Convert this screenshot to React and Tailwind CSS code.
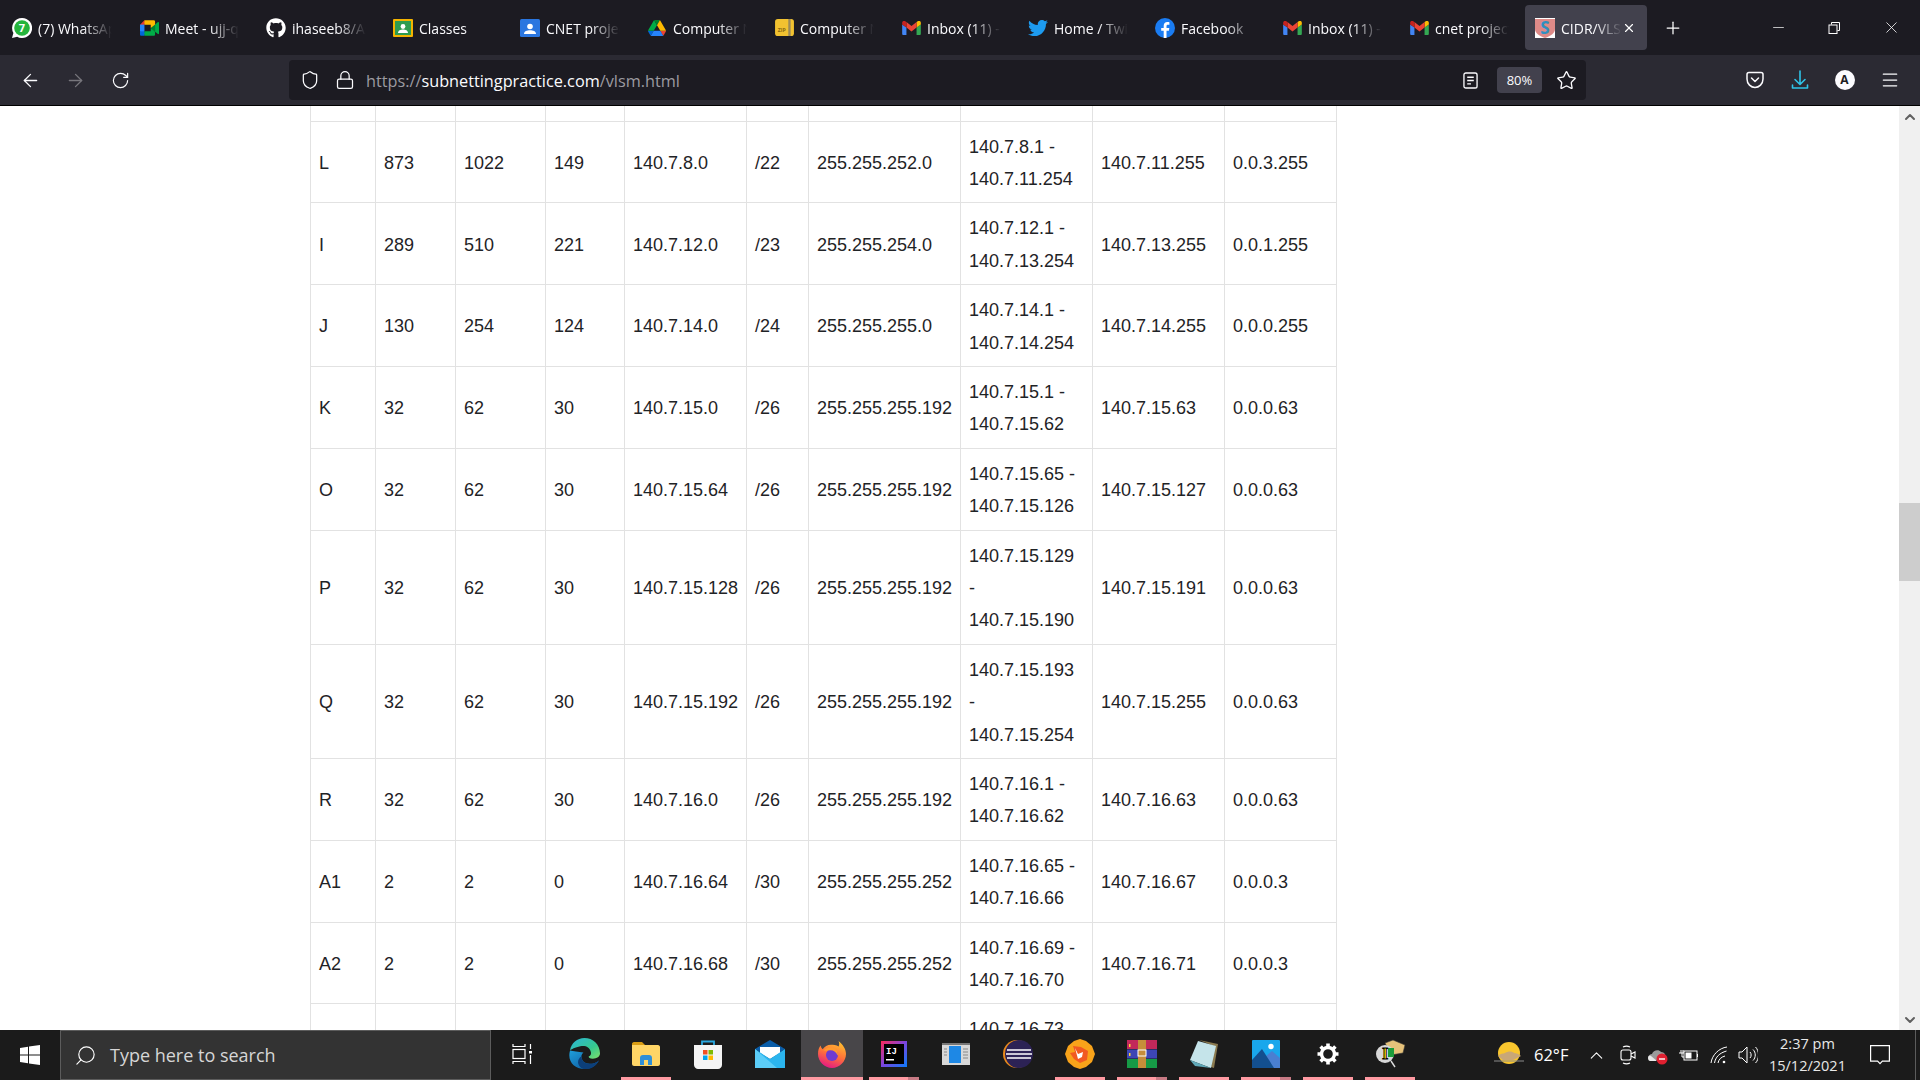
import { ArrowLeft, ArrowRight, RotateCw, Shield, Lock, Star, Plus, X, Minus, Menu, ChevronUp, ChevronDown, Search } from "lucide-react";
import { FaGithub, FaTwitter } from "react-icons/fa";

const uiFont = "font-['Open_Sans','Noto_Sans',sans-serif]";

// icons for the browser tabs
const WhatsappIcon = () => (
  <svg viewBox="0 0 20 20" className="w-5 h-5">
    <path fill="#fff" d="M10 0a10 10 0 0 0-8.6 15L0 20l5.200-1.300A10 10 0 1 0 10 0z" />
    <circle cx="10" cy="10" r="7.800" fill="#25b53c" />
    <text x="10" y="14" textAnchor="middle" fontSize="11" fontWeight="700" fill="#fff" fontFamily="Open Sans">7</text>
  </svg>
);
const MeetIcon = () => (
  <svg viewBox="0 0 87.500 72" className="w-[19px] h-4">
    <path fill="#00832d" d="M49.500 36l8.530 9.750 11.470 7.330 2-17.020-2-16.640-11.690 6.440z" />
    <path fill="#0066da" d="M0 51.500V66c0 3.315 2.685 6 6 6h14.500l3-10.960-3-9.540-9.950-3z" />
    <path fill="#e53935" d="M20.500 0L0 20.500l10.550 3 9.950-3 2.950-9.410z" />
    <path fill="#2684fc" d="M20.500 20.500H0v31h20.500z" />
    <path fill="#00ac47" d="M82.600 8.680L69.500 19.420v33.660l13.160 10.790c1.970 1.540 4.850.135 4.850-2.370V11c0-2.535-2.945-3.925-4.910-2.320zM49.500 36v15.500h-29V72h43c3.315 0 6-2.685 6-6V53.080z" />
    <path fill="#ffba00" d="M63.500 0h-43v20.500h29V36l20-16.570V6c0-3.315-2.685-6-6-6z" />
  </svg>
);
const ClassesIcon = () => (
  <svg viewBox="0 0 20 18" className="w-5 h-[18px]">
    <rect width="20" height="18" rx="1" fill="#f4b400" />
    <rect x="2" y="2" width="16" height="14" fill="#2e9c50" />
    <circle cx="10" cy="7.500" r="2.400" fill="#fff" />
    <path fill="#fff" d="M5 14c0-2.500 2.500-3.500 5-3.500s5 1 5 3.500z" />
  </svg>
);
const CnetIcon = () => (
  <svg viewBox="0 0 20 18" className="w-5 h-[18px]">
    <rect width="20" height="18" rx="1.500" fill="#2a76e0" />
    <circle cx="10" cy="7.500" r="2.800" fill="#fff" />
    <path fill="#fff" d="M4 15c0-2.800 3-3.800 6-3.800s6 1 6 3.800z" />
  </svg>
);
const DriveIcon = () => (
  <svg viewBox="0 0 87.300 78" className="w-[18px] h-4">
    <path fill="#0066da" d="m6.600 66.850 3.850 6.650c.8 1.400 1.950 2.500 3.300 3.300l13.750-23.800h-27.500c0 1.550.4 3.100 1.200 4.500z" />
    <path fill="#00ac47" d="m43.650 25-13.750-23.800c-1.350.8-2.500 1.900-3.300 3.300l-25.400 44a9.060 9.060 0 0 0 -1.200 4.500h27.500z" />
    <path fill="#ea4335" d="m73.550 76.800c1.350-.8 2.500-1.900 3.300-3.300l1.600-2.750 7.650-13.250c.8-1.400 1.200-2.950 1.200-4.500h-27.502l5.852 11.500z" />
    <path fill="#00832d" d="m43.650 25 13.750-23.800c-1.350-.8-2.900-1.200-4.500-1.200h-18.500c-1.600 0-3.150.45-4.500 1.200z" />
    <path fill="#2684fc" d="m59.800 53h-32.300l-13.750 23.800c1.350.8 2.900 1.200 4.500 1.200h50.800c1.600 0 3.150-.45 4.500-1.200z" />
    <path fill="#ffba00" d="m73.400 26.500-12.700-22c-.8-1.400-1.950-2.500-3.300-3.300l-13.750 23.800 16.150 28h27.450c0-1.550-.4-3.100-1.200-4.500z" />
  </svg>
);
const ZipIcon = () => (
  <svg viewBox="0 0 20 18" className="w-[19px] h-[17px]">
    <rect width="20" height="18" rx="3" fill="#f2c230" />
    <rect x="14" y="0" width="2.500" height="18" fill="#9a8a5a" />
    <text x="7" y="14" textAnchor="middle" fontSize="5.500" fontWeight="700" fill="#8a6a10" fontFamily="Open Sans">ZIP</text>
  </svg>
);
const GmailIcon = () => (
  <svg viewBox="0 0 24 18" className="w-[19px] h-[14px]">
    <path fill="#4285f4" d="M1.600 18H5.500V8.500L0 4.400V16.400C0 17.300.7 18 1.600 18z" />
    <path fill="#34a853" d="M18.500 18h3.900c.9 0 1.600-.7 1.600-1.600V4.400l-5.500 4.100z" />
    <path fill="#fbbc04" d="M18.500 1.400v7.100L24 4.400V2.200c0-2-2.300-3.200-3.900-2z" />
    <path fill="#ea4335" d="M5.500 8.500V1.400L12 6.300l6.500-4.900v7.100L12 13.400z" />
    <path fill="#c5221f" d="M0 2.200v2.200l5.500 4.100V1.400L3.900.2C2.300-1 0 .2 0 2.200z" />
  </svg>
);
const FacebookIcon = () => (
  <svg viewBox="0 0 20 20" className="w-5 h-5">
    <circle cx="10" cy="10" r="10" fill="#1a7cf2" />
    <path fill="#fff" d="M11.500 20v-7.200h2.400l.4-2.900h-2.800V8.200c0-.8.3-1.400 1.500-1.400h1.400V4.200c-.6-.1-1.300-.2-2.100-.2-2.200 0-3.600 1.300-3.600 3.800v2.100H6.200v2.900h2.500V20z" />
  </svg>
);
const SubnetIcon = () => (
  <svg viewBox="0 0 20 20" className="w-5 h-5 shrink-0">
    <rect width="20" height="20" fill="#fff" />
    <path fill="#de8a88" d="M0 1h20v10c0 4-4 7-10 9-6-2-10-5-10-9z" />
    <text x="10" y="15.500" textAnchor="middle" fontSize="17" fontWeight="700" fill="#2f8fc0" fontFamily="Open Sans">S</text>
  </svg>
);

const tabs = [
  { title: "(7) WhatsApp", icon: <WhatsappIcon /> },
  { title: "Meet - ujj-qwer", icon: <MeetIcon /> },
  { title: "ihaseeb8/Assign", icon: <FaGithub className="w-5 h-5 text-white" /> },
  { title: "Classes", icon: <ClassesIcon /> },
  { title: "CNET project", icon: <CnetIcon /> },
  { title: "Computer Netw", icon: <DriveIcon /> },
  { title: "Computer Netw", icon: <ZipIcon /> },
  { title: "Inbox (11) - ihas", icon: <GmailIcon /> },
  { title: "Home / Twitter", icon: <FaTwitter className="w-5 h-5 text-[#1d9bf0]" /> },
  { title: "Facebook", icon: <FacebookIcon /> },
  { title: "Inbox (11) - ihas", icon: <GmailIcon /> },
  { title: "cnet project", icon: <GmailIcon /> },
];

function TabBar() {
  return (
    <div className={`flex items-center h-[55px] shrink-0 bg-[#1c1b22] text-[#fbfbfe] text-[14px] ${uiFont}`}>
      {tabs.map((tab, i) => (
        <div key={i} className="flex items-center w-[127px] h-full pl-3 pr-[15px] shrink-0">
          <div className="flex w-5 justify-center shrink-0">{tab.icon}</div>
          <div className="ml-[6px] pt-px flex-1 overflow-hidden whitespace-nowrap [mask-image:linear-gradient(to_right,#000_60%,transparent_100%)]">
            {tab.title}
          </div>
        </div>
      ))}
      <div className="w-[127px] h-full py-[5px] pl-px pr-1 shrink-0">
        <div className="flex items-center h-full pl-[10px] pr-[11px] rounded bg-[#42414d]">
          <SubnetIcon />
          <div className="ml-[6px] pt-px flex-1 overflow-hidden whitespace-nowrap [mask-image:linear-gradient(to_right,#000_55%,transparent_100%)]">
            CIDR/VLSM
          </div>
          <X size={14} className="text-white shrink-0" />
        </div>
      </div>
      <Plus size={20} strokeWidth={1.5} className="ml-3 text-white" />
      <div className="ml-auto flex h-full">
        <div className="flex items-center justify-center w-[56px]"><Minus size={17} strokeWidth={1} className="text-white" /></div>
        <div className="flex items-center justify-center w-[56px]">
          <svg viewBox="0 0 12 12" className="w-3 h-3" fill="none" stroke="#fff">
            <path d="M3.500 2.500V.5h8v8h-2" />
            <rect x="1" y="3" width="8" height="8.500" />
          </svg>
        </div>
        <div className="flex items-center justify-center w-[58px]"><X size={19} strokeWidth={1} className="text-white" /></div>
      </div>
    </div>
  );
}

function ToolBar() {
  return (
    <div className={`flex items-center h-[51px] shrink-0 pl-2 pr-2 bg-[#2b2a33] border-b border-black ${uiFont}`}>
      <div className="flex items-center justify-center w-[45px]"><ArrowLeft size={21} strokeWidth={1.5} className="text-[#fbfbfe]" /></div>
      <div className="flex items-center justify-center w-[45px]"><ArrowRight size={21} strokeWidth={1.5} className="text-[#77767c]" /></div>
      <div className="flex items-center justify-center w-[45px]"><RotateCw size={19} strokeWidth={1.5} className="text-[#fbfbfe]" /></div>
      <div className="flex items-center w-[1297px] h-10 ml-[146px] pl-[11px] pr-[5px] rounded bg-[#1c1b22]">
        <Shield size={20} strokeWidth={1.5} className="text-[#fbfbfe] shrink-0" />
        <Lock size={20} strokeWidth={1.5} className="ml-[15px] text-[#fbfbfe] shrink-0" />
        <div className="ml-[11px] pt-[3px] text-[16.25px] text-[#9b9aa0]">
          https://<span className="text-[#fbfbfe]">subnettingpractice.com</span>/vlsm.html
        </div>
        <svg viewBox="0 0 16 18" className="ml-auto w-[15px] h-[17px]" fill="none" stroke="#fbfbfe" strokeWidth="1.400">
          <rect x="1" y="1" width="14" height="16" rx="2" />
          <path d="M4.500 5.500h7M4.500 9h7M4.500 12.500h4" />
        </svg>
        <div className="flex items-center justify-center ml-[19px] w-[45px] h-[26px] pt-px rounded bg-[#42414d] text-[13px] text-[#fbfbfe]">80%</div>
        <Star size={21} strokeWidth={1.5} className="ml-[14px] mr-1 text-[#fbfbfe]" />
      </div>
      <div className="ml-auto flex items-center">
        <div className="flex items-center justify-center w-[45px]">
          <svg viewBox="0 0 18 18" className="w-[18px] h-[18px]" fill="none" stroke="#fbfbfe" strokeWidth="1.500" strokeLinejoin="round" strokeLinecap="round">
            <path d="M1 3.500C1 2 2 1.500 3 1.500h12c1 0 2 .5 2 2V8c0 5-4 8.500-8 8.500S1 13 1 8z" />
            <path d="M5.500 7L9 10.500 12.500 7" />
          </svg>
        </div>
        <div className="flex items-center justify-center w-[45px]">
          <svg viewBox="0 0 18 20" className="w-[18px] h-5" fill="none" stroke="#2fc4e8" strokeWidth="1.600" strokeLinecap="round" strokeLinejoin="round">
            <path d="M9 1v13M4 9.500L9 14.500l5-5M1.500 15v3h15v-3" />
          </svg>
        </div>
        <div className="flex items-center justify-center w-[45px]">
          <div className="flex items-center justify-center w-5 h-5 rounded-full bg-[#fbfbfe] text-[12px] font-bold text-[#1c1b22]">A</div>
        </div>
        <div className="flex items-center justify-center w-[45px]"><Menu size={20} strokeWidth={1.5} className="text-[#fbfbfe]" /></div>
      </div>
    </div>
  );
}

const rows = [
  ["L", "873", "1022", "149", "140.7.8.0", "/22", "255.255.252.0", ["140.7.8.1 -", "140.7.11.254"], "140.7.11.255", "0.0.3.255"],
  ["I", "289", "510", "221", "140.7.12.0", "/23", "255.255.254.0", ["140.7.12.1 -", "140.7.13.254"], "140.7.13.255", "0.0.1.255"],
  ["J", "130", "254", "124", "140.7.14.0", "/24", "255.255.255.0", ["140.7.14.1 -", "140.7.14.254"], "140.7.14.255", "0.0.0.255"],
  ["K", "32", "62", "30", "140.7.15.0", "/26", "255.255.255.192", ["140.7.15.1 -", "140.7.15.62"], "140.7.15.63", "0.0.0.63"],
  ["O", "32", "62", "30", "140.7.15.64", "/26", "255.255.255.192", ["140.7.15.65 -", "140.7.15.126"], "140.7.15.127", "0.0.0.63"],
  ["P", "32", "62", "30", "140.7.15.128", "/26", "255.255.255.192", ["140.7.15.129", "-", "140.7.15.190"], "140.7.15.191", "0.0.0.63"],
  ["Q", "32", "62", "30", "140.7.15.192", "/26", "255.255.255.192", ["140.7.15.193", "-", "140.7.15.254"], "140.7.15.255", "0.0.0.63"],
  ["R", "32", "62", "30", "140.7.16.0", "/26", "255.255.255.192", ["140.7.16.1 -", "140.7.16.62"], "140.7.16.63", "0.0.0.63"],
  ["A1", "2", "2", "0", "140.7.16.64", "/30", "255.255.255.252", ["140.7.16.65 -", "140.7.16.66"], "140.7.16.67", "0.0.0.3"],
  ["A2", "2", "2", "0", "140.7.16.68", "/30", "255.255.255.252", ["140.7.16.69 -", "140.7.16.70"], "140.7.16.71", "0.0.0.3"],
  ["A3", "2", "2", "0", "140.7.16.72", "/30", "255.255.255.252", ["140.7.16.73", "140.7.16.74"], "140.7.16.75", "0.0.0.3"],
];

const cellCls = "border border-[#e2e2e2] px-2 pt-[9px] pb-[7px] align-middle whitespace-nowrap";

function Page() {
  return (
    <div className="flex flex-1 min-h-0 bg-white">
      <div className="flex-1 overflow-hidden pl-[310px]">
        <table className="table-fixed border-collapse w-[1026px] text-[18px] leading-[32.4px] text-[#1f2326] font-['Liberation_Sans',Arial,sans-serif]">
          <colgroup>
            <col className="w-[65px]" />
            <col className="w-[80px]" />
            <col className="w-[90px]" />
            <col className="w-[79px]" />
            <col className="w-[122px]" />
            <col className="w-[62px]" />
            <col className="w-[152px]" />
            <col className="w-[132px]" />
            <col className="w-[132px]" />
            <col className="w-[112px]" />
          </colgroup>
          <tbody>
            <tr className="h-[15px]">
              {rows[0].map((_, i) => (
                <td key={i} className="border-x border-b border-[#e2e2e2] p-0" />
              ))}
            </tr>
            {rows.map((row) => (
              <tr key={row[0]}>
                {row.map((cell, i) => (
                  <td key={i} className={cellCls}>
                    {Array.isArray(cell)
                      ? cell.map((line) => <div key={line}>{line}</div>)
                      : cell}
                  </td>
                ))}
              </tr>
            ))}
          </tbody>
        </table>
      </div>
      <div className="flex flex-col w-[21px] shrink-0 bg-[#f0f0f0]">
        <div className="flex items-center justify-center h-[21px]"><ChevronUp size={16} strokeWidth={3} className="text-[#606060]" /></div>
        <div className="h-[376px]" />
        <div className="h-[78px] bg-[#cdcdcd]" />
        <div className="flex-1" />
        <div className="flex items-center justify-center h-[21px]"><ChevronDown size={16} strokeWidth={3} className="text-[#606060]" /></div>
      </div>
    </div>
  );
}

// icons for the taskbar
const EdgeIcon = () => (
  <svg viewBox="0 0 30 30" className="w-[31px] h-[31px]">
    <defs>
      <linearGradient id="edgeA" x1="0" y1="0" x2="1" y2="1">
        <stop offset="0" stopColor="#2bb5d8" />
        <stop offset="0.6" stopColor="#36c98f" />
        <stop offset="1" stopColor="#7fe06a" />
      </linearGradient>
      <linearGradient id="edgeB" x1="0" y1="0" x2="1" y2="1">
        <stop offset="0" stopColor="#1f9fdc" />
        <stop offset="1" stopColor="#0b4f94" />
      </linearGradient>
    </defs>
    <path fill="url(#edgeB)" d="M1 12c-3 10 4 18 14 18 6 0 11-3 14-8-2 2-6 3-9 3-5 0-8-3-8-7 0-2 1-3 2-4-5-1-10-1-13-2z" />
    <path fill="url(#edgeA)" d="M1 12C2 5 8 0 15 0c8 0 15 6 15 15 0 3-3 5-7 5-3 0-4-1-4-2 2-1 3-3 2-5-1-4-5-6-10-5-5 1-9 3-10 4z" />
    <path fill="#0c3f7a" d="M19 30c-5 1-9-1-10-5-1-3 1-6 3-7 0 4 3 7 8 7 3 0 7-1 9-4-2 5-6 8-10 9z" />
  </svg>
);
const FolderIcon = () => (
  <svg viewBox="0 0 28 24" className="w-7 h-6">
    <path fill="#d99d14" d="M0 2c0-1 .7-2 2-2h8l3 3h-13z" />
    <path fill="#ffd566" d="M0 3h26c1 0 2 1 2 2v17c0 1-1 2-2 2H2c-1 0-2-1-2-2z" />
    <path fill="#2f8fd8" d="M8 23v-7c0-2 1-3 3-3h6c2 0 3 1 3 3v7h-4v-5h-4v5z" />
  </svg>
);
const StoreIcon = () => (
  <svg viewBox="0 0 28 30" className="w-7 h-[30px]">
    <path fill="none" stroke="#29a8e0" strokeWidth="1.800" d="M8 7V2.500h12V7" />
    <path fill="#f4f4f4" d="M0 6h28v20c0 2-2 4-4 4H4c-2 0-4-2-4-4z" />
    <rect x="9" y="11" width="4.500" height="4.500" fill="#f25022" />
    <rect x="14.500" y="11" width="4.500" height="4.500" fill="#7fba00" />
    <rect x="9" y="16.500" width="4.500" height="4.500" fill="#00a4ef" />
    <rect x="14.500" y="16.500" width="4.500" height="4.500" fill="#ffb900" />
  </svg>
);
const MailIcon = () => (
  <svg viewBox="0 0 30 28" className="w-[30px] h-7">
    <path fill="#0a5da8" d="M0 9L15 0l15 9-15 10z" />
    <path fill="#fff" d="M5 7h20v6l-10 6-10-6z" />
    <path fill="#2bb5ee" d="M0 9l15 10L30 9v19H0z" />
    <path fill="#5ccdf7" d="M0 9l22 19H0z" />
  </svg>
);
const FirefoxIcon = () => (
  <svg viewBox="0 0 30 30" className="w-7 h-7">
    <defs>
      <linearGradient id="fxA" x1="0.7" y1="0" x2="0.3" y2="1">
        <stop offset="0" stopColor="#ffc02e" />
        <stop offset="0.5" stopColor="#ff7139" />
        <stop offset="1" stopColor="#e31587" />
      </linearGradient>
    </defs>
    <path fill="url(#fxA)" d="M22 1c5 4 8 9 8 14 0 8-7 15-15 15S0 23 0 15C0 11 1 8 3 6c0 2 1 3 2 4 2-3 5-5 9-5 2 0 6 0 8 2 1-2 1-4 0-6z" />
    <circle cx="15" cy="16" r="6.500" fill="#6e3bd1" />
    <path fill="#ff9a2e" d="M6 11c3-3 8-4 12-2 3 2 4 5 3 8-1-4-4-6-8-6-3 0-5 1-7 0z" />
  </svg>
);
const IntellijIcon = () => (
  <svg viewBox="0 0 26 26" className="w-[26px] h-[26px]">
    <defs>
      <linearGradient id="ijA" x1="0" y1="0" x2="1" y2="1">
        <stop offset="0" stopColor="#fe2857" />
        <stop offset="0.5" stopColor="#7a45e0" />
        <stop offset="1" stopColor="#087cfa" />
      </linearGradient>
    </defs>
    <rect width="26" height="26" fill="url(#ijA)" />
    <rect x="3" y="3" width="20" height="20" fill="#000" />
    <text x="5" y="13" fontSize="9" fontWeight="700" fill="#fff" fontFamily="Liberation Mono">IJ</text>
    <rect x="5" y="18" width="8" height="1.500" fill="#fff" />
  </svg>
);
const WindowIcon = () => (
  <svg viewBox="0 0 28 22" className="w-7 h-[22px]">
    <rect width="28" height="22" fill="#d8d8d8" />
    <rect width="28" height="2" fill="#777" />
    <rect x="7" y="3" width="12" height="17" fill="#1e88e5" />
    <path stroke="#888" strokeWidth="1" d="M2 6h3M2 9h3M2 12h3M21 6h5M21 9h5M21 12h5M21 15h5" />
  </svg>
);
const EclipseIcon = () => (
  <svg viewBox="0 0 30 30" className="w-[30px] h-[30px]">
    <circle cx="14" cy="15" r="14" fill="#e8891c" />
    <circle cx="16" cy="15" r="14" fill="#2c2255" />
    <path stroke="#fff" strokeWidth="1.600" d="M4 11h24M3 15h26M4 19h24" />
  </svg>
);
const BraveIcon = () => (
  <svg viewBox="0 0 30 30" className="w-[30px] h-[30px]">
    <path fill="#f9a31a" d="M15 0l6 2 6 5 3 8-3 8-6 5-6 2-6-2-6-5-3-8 3-8 6-5z" />
    <path fill="#f15a22" d="M8 7l8 1 7 4-1 9-7 3-6-4-4-6 5-1z" />
    <path fill="#fff" d="M10 9l3 6 5-2-1 5-4 2z" />
  </svg>
);
const WinrarIcon = () => (
  <svg viewBox="0 0 30 28" className="w-[30px] h-7">
    <rect width="30" height="9" fill="#c2285a" />
    <rect y="9.500" width="30" height="9" fill="#3d46b5" />
    <rect y="19" width="30" height="9" fill="#169a46" />
    <rect x="11" width="8" height="28" fill="#c68d3a" />
    <rect x="11" y="10" width="8" height="6" fill="none" stroke="#fff" strokeWidth="1" />
    <rect x="2" y="4" width="1.500" height="3" fill="#ffd23a" />
    <rect x="2" y="13" width="1.500" height="3" fill="#ffd23a" />
  </svg>
);
const NotepadIcon = () => (
  <svg viewBox="0 0 28 28" className="w-7 h-7">
    <path fill="#8a7a50" d="M9 0l19 4-4 24-3-1 3-21z" />
    <path fill="#c5e4ea" d="M8 1l18 5-5 22L0 20z" />
    <path fill="#5fa8b8" d="M0 20l21 8-16-2z" />
  </svg>
);
const PhotosIcon = () => (
  <svg viewBox="0 0 28 28" className="w-7 h-7">
    <rect width="28" height="28" rx="1" fill="#19a7ec" />
    <circle cx="19" cy="6.500" r="2.700" fill="#fff" />
    <path fill="#4a7fd1" d="M14 16l6-5 8 7v10H14z" />
    <path fill="#134f8f" d="M0 20L10 9l12 19H0z" />
  </svg>
);
const GearIcon = () => (
  <svg viewBox="0 0 24 24" className="w-6 h-6" fill="none" stroke="#fff" strokeWidth="3.400">
    <circle cx="12" cy="12" r="6.500" />
    <path strokeWidth="3.600" d="M12 1.500v4M12 18.500v4M1.500 12h4M18.500 12h4M4.600 4.600l2.800 2.800M16.600 16.600l2.800 2.800M4.600 19.400l2.800-2.800M16.600 7.400l2.800-2.800" />
  </svg>
);
const InspectorIcon = () => (
  <svg viewBox="0 0 32 30" className="w-8 h-[30px]">
    <path fill="#e6c27a" stroke="#333" strokeWidth="0.600" d="M11 4l8-3 12 5-2 8-12 2z" />
    <circle cx="11" cy="15" r="9" fill="#d8d8d8" />
    <path stroke="#ddd" strokeWidth="1.400" d="M17 22l4 6" />
    <rect x="14" y="9" width="6" height="9" fill="#1c9c3a" />
    <text x="11" y="20" textAnchor="middle" fontSize="16" fontWeight="700" fill="#f6c500" stroke="#000" strokeWidth="0.800" fontFamily="Liberation Serif">I</text>
  </svg>
);

const taskApps = [
  {
    icon: (
      <svg viewBox="0 0 20 20" className="w-5 h-5" fill="none" stroke="#fff" strokeWidth="1.200">
        <path d="M1 0v2.500h12V0M1 20v-2.500h12V20" />
        <rect x="1" y="5.500" width="12" height="9" />
        <path d="M18.500 0v5M18.500 11v9" />
        <rect x="17" y="7" width="3" height="2.500" fill="#fff" stroke="none" />
      </svg>
    ),
  },
  { icon: <EdgeIcon /> },
  { icon: <FolderIcon />, line: "open" },
  { icon: <StoreIcon /> },
  { icon: <MailIcon /> },
  { icon: <FirefoxIcon />, line: "active" },
  { icon: <IntellijIcon />, line: "stack" },
  { icon: <WindowIcon /> },
  { icon: <EclipseIcon /> },
  { icon: <BraveIcon />, line: "open" },
  { icon: <WinrarIcon />, line: "stack" },
  { icon: <NotepadIcon />, line: "open" },
  { icon: <PhotosIcon />, line: "stack" },
  { icon: <GearIcon />, line: "open" },
  { icon: <InspectorIcon />, line: "open" },
];

function TaskApp({ icon, line }) {
  return (
    <div className={`flex flex-col w-[62px] h-full shrink-0 ${line === "active" ? "bg-[#484649]" : ""}`}>
      <div className="flex flex-1 items-center justify-center">{icon}</div>
      <div className={`flex h-[3px] ${line === "active" ? "" : "mx-[6px]"}`}>
        {line && <div className="flex-1 bg-[#ff9aa2]" />}
        {line === "stack" && <div className="w-[11px] bg-[#c77a84]" />}
      </div>
    </div>
  );
}

function TaskBar() {
  return (
    <div className={`flex items-center h-[50px] shrink-0 bg-[#1b1b1b] text-white ${uiFont}`}>
      <div className="flex items-center justify-center w-[60px] h-full">
        <svg viewBox="0 0 20 20" className="w-5 h-5" fill="#fff">
          <path d="M0 3l8-1.200v7.700H0zM9 1.600L20 0v9.500H9zM0 10.500h8v7.700L0 17zM9 10.500h11V20L9 18.400z" />
        </svg>
      </div>
      <div className="flex items-center w-[431px] h-full pl-[13px] bg-[#333] border border-[#5c5c5c] shrink-0">
        <Search size={23} strokeWidth={1.2} className="text-white -scale-x-100" />
        <span className="ml-[13px] text-[18px] text-[#d6d6d6]">Type here to search</span>
      </div>
      {taskApps.map((app, i) => (
        <TaskApp key={i} icon={app.icon} line={app.line} />
      ))}
      <div className="flex items-center h-full ml-[73px]">
        <svg viewBox="0 0 30 26" className="w-[30px] h-[26px]">
          <circle cx="15" cy="11" r="11" fill="#f9c62e" />
          <path fill="#c9a777" d="M4 14c3-3 5-2 7-3 3-2 7-2 9 0 2 0 5 1 7 3-3 1-5 3-8 4H9c-2-1-3-3-5-4z" />
          <path stroke="#8c8c8c" d="M0 19h30" />
        </svg>
        <span className="ml-[10px] text-[16.5px]">62°F</span>
      </div>
      <div className="flex items-center justify-center ml-[15px] w-[26px]"><ChevronUp size={21} strokeWidth={1.2} /></div>
      <div className="flex items-center justify-center ml-[4px] w-[30px]">
        <svg viewBox="0 0 16 22" className="w-4 h-[22px]" fill="none" stroke="#fff" strokeWidth="1.100">
          <rect x="1" y="6" width="10" height="10" rx="2" />
          <path d="M11 10l4-2v6l-4-2M3 3c2-1 5-1 7 0M3 19c2 1 5 1 7 0" />
        </svg>
      </div>
      <div className="flex items-center justify-center w-[30px]">
        <svg viewBox="0 0 22 20" className="w-[22px] h-5">
          <path fill="#9a9a9a" d="M2 12c0-2 1-3 3-3 1-4 7-5 9-2 2 0 4 1 4 3v5H4c-1 0-2-1-2-3z" />
          <path fill="#e8e8e8" d="M1 13c0-2 1-3 3-2l6 5H3c-1 0-2-1-2-3z" />
          <circle cx="15" cy="14" r="5.500" fill="#e02030" />
          <rect x="12" y="13.300" width="6" height="1.400" fill="#fff" />
        </svg>
      </div>
      <div className="flex items-center justify-center w-[31px]">
        <svg viewBox="0 0 20 14" className="w-5 h-[14px]" fill="none" stroke="#fff">
          <rect x="5" y="3" width="13" height="9" />
          <rect x="6.500" y="4.500" width="6" height="6" fill="#fff" stroke="none" />
          <path d="M18.500 6v3M0 5h5M2 2v3M4 2v3M3 5v4h2" />
        </svg>
      </div>
      <div className="flex items-center justify-center w-[30px]">
        <svg viewBox="0 0 18 18" className="w-[18px] h-[18px]" fill="none" stroke="#fff" strokeWidth="1">
          <path d="M1 17C2 9 9 2 17 1M4.500 17c1-6 5-10 12-12M8 17c.7-3.500 3-6 7-7" />
          <circle cx="14" cy="16" r="1.300" fill="#fff" stroke="none" />
        </svg>
      </div>
      <div className="flex items-center justify-center w-[28px]">
        <svg viewBox="0 0 20 18" className="w-5 h-[18px]" fill="none" stroke="#fff" strokeWidth="1">
          <path d="M1 6h3l5-5v16l-5-5H1zM12 6c1.500 1.500 1.500 4.500 0 6M15 3.500c3 3 3 8 0 11M17.500 1c4 4 4 12 0 16" />
        </svg>
      </div>
      <div className="flex flex-col items-center w-[90px] text-[14.5px] leading-[22px] text-[#e8e8e8]">
        <span>2:37 pm</span>
        <span>15/12/2021</span>
      </div>
      <div className="flex items-center justify-center ml-[13px] w-[30px]">
        <svg viewBox="0 0 20 20" className="w-5 h-5" fill="none" stroke="#fff" strokeWidth="1.200">
          <path d="M.6.6h18.800v15.500h-7l-2.400 2.600-2.400-2.600H.6z" />
        </svg>
      </div>
      <div className="ml-auto mr-[4px] w-px h-full bg-[#5c5c5c]" />
    </div>
  );
}

export default function App() {
  return (
    <div className="flex flex-col w-screen h-screen overflow-hidden">
      <TabBar />
      <ToolBar />
      <Page />
      <TaskBar />
    </div>
  );
}
